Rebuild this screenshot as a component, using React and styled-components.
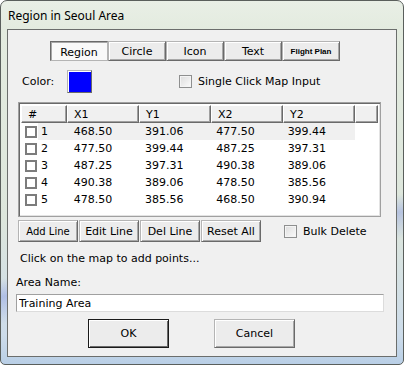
import React from 'react'
import styled, { createGlobalStyle } from 'styled-components'

const rows = [
    { id: 1, x1: '468.50', y1: '391.06', x2: '477.50', y2: '399.44' },
    { id: 2, x1: '477.50', y1: '399.44', x2: '487.25', y2: '397.31' },
    { id: 3, x1: '487.25', y1: '397.31', x2: '490.38', y2: '389.06' },
    { id: 4, x1: '490.38', y1: '389.06', x2: '478.50', y2: '385.56' },
    { id: 5, x1: '478.50', y1: '385.56', x2: '468.50', y2: '390.94' },
]

const tabs = ['Region', 'Circle', 'Icon', 'Text', 'Flight Plan']
const cols = [
    { key: 'id', label: '#', width: 46 },
    { key: 'x1', label: 'X1', width: 72 },
    { key: 'y1', label: 'Y1', width: 72 },
    { key: 'x2', label: 'X2', width: 72 },
    { key: 'y2', label: 'Y2', width: 72 },
]

export default function App() {
    return (
        <>
            <Global />
            <Window>
                <TitleBar>Region in Seoul Area</TitleBar>
                <Client>
                    <TabRow>
                        {tabs.map((t, i) => (
                            <TabButton key={t} $active={i === 0} $small={t === 'Flight Plan'}>{t}</TabButton>
                        ))}
                    </TabRow>

                    <ColorRow>
                        <Label>Color:</Label>
                        <Swatch />
                        <CheckLabel $left={87}>
                            <Box />
                            Single Click Map Input
                        </CheckLabel>
                    </ColorRow>

                    <ListView>
                        <Header>
                            {cols.map((c) => (
                                <HeadCell key={c.key} style={{ width: c.width }}>{c.label}</HeadCell>
                            ))}
                            <HeadCell style={{ flex: 1 }} />
                        </Header>
                        {rows.map((r, i) => (
                            <Row key={r.id}>
                                <Box $row />
                                <RowBody $selected={i === 0}>
                                    <Cell $w={33}>{r.id}</Cell>
                                    <Cell $w={72}>{r.x1}</Cell>
                                    <Cell $w={72}>{r.y1}</Cell>
                                    <Cell $w={72}>{r.x2}</Cell>
                                    <Cell $w={68}>{r.y2}</Cell>
                                </RowBody>
                            </Row>
                        ))}
                    </ListView>

                    <ButtonRow>
                        <ActionButton $small>Add Line</ActionButton>
                        <ActionButton>Edit Line</ActionButton>
                        <ActionButton>Del Line</ActionButton>
                        <ActionButton>Reset All</ActionButton>
                        <CheckLabel $left={22}>
                            <Box />
                            Bulk Delete
                        </CheckLabel>
                    </ButtonRow>

                    <Status>Click on the map to add points...</Status>
                    <AreaLabel>Area Name:</AreaLabel>
                    <TextInput defaultValue="Training Area" />

                    <Footer>
                        <DialogButton $default>OK</DialogButton>
                        <DialogButton>Cancel</DialogButton>
                    </Footer>
                </Client>
            </Window>
        </>
    )
}

const Global = createGlobalStyle`
    body{
        margin: 0;
        overflow: hidden;
        background: #fff;
    }
    *{
        box-sizing: border-box;
    }
`;

const Window = styled.div`
    width: 404px;
    height: 365px;
    display: flex;
    flex-direction: column;
    border: 1px solid #5a5f5c;
    border-radius: 7px 7px 5px 5px;
    padding: 0 6px 7px 6px;
    background:
        linear-gradient(168deg, transparent 62%, rgba(110, 130, 230, 0.35) 66%, transparent 72%),
        linear-gradient(to bottom, #e9efe6 0%, #e3ebdf 8%, #dde6dc 60%, #cddcea 92%, #b9cfe6 100%);
    font-family: "DejaVu Sans", Verdana, sans-serif;
    font-size: 11px;
    color: #000;
`;

const TitleBar = styled.div`
    height: 28px;
    padding: 6px 0 0 1px;
    font-family: "Noto Sans", "Open Sans", sans-serif;
    font-size: 12px;
    color: #000;
`;

const Client = styled.div`
    flex: 1;
    display: flex;
    flex-direction: column;
    border: 1px solid #6b6e6c;
    background: #f0f0f0;
`;

const TabRow = styled.div`
    display: flex;
    margin: 11px 0 0 42px;
`;

const raised = `
    border: 1px solid;
    border-color: #b4b4b4 #6a6a6a #6a6a6a #b4b4b4;
    box-shadow: inset 1px 1px #ffffff, inset -1px -1px #a8a8a8;
    background: #ececec;
`;

const TabButton = styled.div`
    width: 58px;
    height: 20px;
    display: flex;
    align-items: center;
    justify-content: center;
    ${raised}
    font-size: ${p => p.$small ? '8px' : '11px'};
    font-weight: ${p => p.$small ? 'bold' : 'normal'};
    font-family: ${p => p.$small ? '"Liberation Sans", Arial, sans-serif' : 'inherit'};
    padding-top: ${p => p.$active ? '2px' : '0'};
    ${p => p.$active && `
        border-color: #6a6a6a #b4b4b4 #b4b4b4 #6a6a6a;
        box-shadow: inset 1px 1px #a8a8a8;
        background: #f9f9f9;
    `}
`;

const ColorRow = styled.div`
    display: flex;
    align-items: center;
    margin: 9px 0 0 14px;
    height: 23px;
`;

const Label = styled.span`
    width: 45px;
`;

const Swatch = styled.div`
    width: 25px;
    height: 23px;
    background: #0000ff;
    border: 1px solid;
    border-color: #b4b4b4 #6a6a6a #6a6a6a #b4b4b4;
    box-shadow: inset 1px 1px #ffffff;
`;

const CheckLabel = styled.label`
    display: flex;
    align-items: center;
    gap: 6px;
    margin-left: ${p => p.$left}px;
`;

const Box = styled.span`
    width: 13px;
    height: 13px;
    border: 1px solid #8e8f8f;
    background: ${p => p.$row ? '#fff' : 'linear-gradient(135deg, #dcdcdc, #fbfbfb)'};
    box-shadow: inset 0 0 0 1px #f4f4f4;
    flex-shrink: 0;
    ${p => p.$row && `
        width: 12px;
        height: 12px;
        margin: 0 1px 0 4px;
        border: 2px solid #7c7c7c;
        box-shadow: none;
    `}
`;

const ListView = styled.div`
    margin: 9px 0 0 10px;
    width: 363px;
    height: 115px;
    border: 1px solid #a0a0a0;
    box-shadow: inset 1px 1px #696969, inset -1px -1px #e3e3e3;
    background: #fff;
    padding: 2px;
    display: flex;
    flex-direction: column;
`;

const Header = styled.div`
    display: flex;
    height: 18px;
    background: #f0f0f0;
`;

const HeadCell = styled.div`
    height: 18px;
    padding: 2px 0 0 6px;
    border: 1px solid;
    border-color: #fff #6a6a6a #6a6a6a #fff;
    box-shadow: inset -1px -1px #a0a0a0;
`;

const Row = styled.div`
    display: flex;
    height: 17px;
    align-items: center;
`;

const RowBody = styled.div`
    display: flex;
    height: 17px;
    align-items: center;
    padding-left: 3px;
    width: 317px;
    background: ${p => p.$selected ? '#f0f0f0' : 'transparent'};
`;

const Cell = styled.div`
    width: ${p => p.$w}px;
`;

const ButtonRow = styled.div`
    display: flex;
    align-items: center;
    gap: 1px;
    margin: 3px 0 0 10px;
`;

const ActionButton = styled.div`
    width: 60px;
    height: 22px;
    display: flex;
    align-items: center;
    justify-content: center;
    ${raised}
    font-size: ${p => p.$small ? '10px' : '11px'};
`;

const Status = styled.div`
    margin: 10px 0 0 12px;
`;

const AreaLabel = styled.div`
    margin: 11px 0 0 8px;
`;

const TextInput = styled.input`
    margin: 5px 0 0 8px;
    width: 368px;
    height: 18px;
    border: 1px solid;
    border-color: #a0a0a0 #dcdcdc #dcdcdc #a0a0a0;
    background: #fff;
    font-family: "DejaVu Sans", Verdana, sans-serif;
    font-size: 11px;
    padding: 0 2px;
    outline: none;
`;

const Footer = styled.div`
    display: flex;
    gap: 45px;
    margin: 7px 0 0 80px;
`;

const DialogButton = styled.div`
    width: 81px;
    height: 29px;
    display: flex;
    align-items: center;
    justify-content: center;
    ${raised}
    ${p => p.$default && `
        border: 1px solid #1a1a1a;
        box-shadow: inset 1px 1px #ffffff, inset -1px -1px #6a6a6a;
    `}
`;
